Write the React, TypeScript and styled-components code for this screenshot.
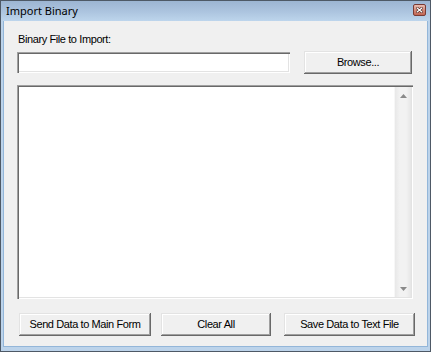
import React from 'react';
import styled, { createGlobalStyle } from 'styled-components';

const GlobalStyle = createGlobalStyle`
  html, body {
    margin: 0;
    padding: 0;
    background: #ffffff;
  }
`;

const Window = styled.div`
  width: 431px;
  height: 352px;
  box-sizing: border-box;
  display: flex;
  flex-direction: column;
  border: 1px solid #4e5966;
  background: #bcd3ea;
  padding: 0 2px 4px 2px;
`;

const TitleBar = styled.div`
  height: 20px;
  margin: 0 -2px;
  display: flex;
  align-items: center;
  justify-content: space-between;
  padding: 0 4px 0 5px;
  background: linear-gradient(to bottom, #9cb5d2 0%, #abc3de 50%, #bdd5ec 100%);
`;

const Title = styled.span`
  font-family: 'Noto Sans', 'DejaVu Sans', sans-serif;
  font-size: 11px;
  color: #000000;
  line-height: 20px;
`;

const CloseButton = styled.div`
  width: 13px;
  height: 12px;
  box-sizing: border-box;
  border: 1px solid #7a3a33;
  border-radius: 2px;
  background: linear-gradient(to bottom, #e9bdb2 0%, #d48c7c 50%, #c16552 100%);
  display: flex;
  align-items: center;
  justify-content: center;
  margin-top: -2px;
`;

const Client = styled.div`
  flex: 1;
  background: #f0f0f0;
  border-left: 1px solid #93b6d9;
  border-right: 1px solid #93b6d9;
  border-bottom: 1px solid #93b6d9;
  display: flex;
  flex-direction: column;
  padding: 12px 0 0 13px;
  font-family: 'Liberation Sans', Arial, sans-serif;
  font-size: 11px;
  letter-spacing: -0.4px;
  color: #000000;
`;

const Label = styled.div`
  line-height: 13px;
  padding-left: 1px;
`;

const FileRow = styled.div`
  display: flex;
  align-items: center;
  gap: 14px;
  margin-top: 5px;
`;

const sunken = `
  box-shadow:
    inset 1px 1px 0 #a0a0a0,
    inset 2px 2px 0 #696969,
    inset -1px -1px 0 #ffffff,
    inset -2px -2px 0 #e3e3e3;
`;

const TextInput = styled.div`
  width: 273px;
  height: 21px;
  background: #ffffff;
  ${sunken}
`;

const Button = styled.div<{ $width: number; $offset?: number }>`
  width: ${(p) => p.$width}px;
  margin-left: ${(p) => p.$offset ?? 0}px;
  height: 23px;
  box-sizing: border-box;
  display: flex;
  align-items: center;
  justify-content: center;
  background: #f0f0f0;
  box-shadow:
    inset -1px -1px 0 #696969,
    inset 1px 1px 0 #e3e3e3,
    inset -2px -2px 0 #a0a0a0,
    inset 2px 2px 0 #ffffff;
  padding-bottom: 1px;
`;

const ListBox = styled.div`
  width: 396px;
  height: 214px;
  margin-top: 11px;
  box-sizing: border-box;
  padding: 2px;
  background: #ffffff;
  display: flex;
  ${sunken}
`;

const ListContent = styled.div`
  flex: 1;
`;

const ScrollBar = styled.div`
  width: 17px;
  display: flex;
  flex-direction: column;
  justify-content: space-between;
  align-items: center;
  background: linear-gradient(to right, #e8e8e8 0%, #f2f2f2 30%, #f2f2f2 70%, #e6e6e6 100%);
  border-left: 1px solid #f7f7f7;
  box-sizing: border-box;
`;

const Arrow = styled.div`
  width: 17px;
  height: 17px;
  display: flex;
  align-items: center;
  justify-content: center;
`;

const ButtonRow = styled.div`
  display: flex;
  margin-top: 14px;
  padding-left: 2px;
`;

const ArrowIcon: React.FC<{ dir: 'up' | 'down' }> = ({ dir }) => (
  <svg width="7" height="4" viewBox="0 0 7 4">
    {dir === 'up' ? (
      <polygon points="3.5,0 7,4 0,4" fill="#8a8a8a" />
    ) : (
      <polygon points="0,0 7,0 3.5,4" fill="#8a8a8a" />
    )}
  </svg>
);

const App: React.FC = () => {
  return (
    <>
      <GlobalStyle />
      <Window>
        <TitleBar>
          <Title>Import Binary</Title>
          <CloseButton>
            <svg width="7" height="6" viewBox="0 0 7 6">
              <path d="M0.5 0.5 L6.5 5.5 M6.5 0.5 L0.5 5.5" stroke="#4a1e18" strokeWidth="2.6" />
              <path d="M0.8 0.8 L6.2 5.2 M6.2 0.8 L0.8 5.2" stroke="#ffffff" strokeWidth="1.4" />
            </svg>
          </CloseButton>
        </TitleBar>
        <Client>
          <Label>Binary File to Import:</Label>
          <FileRow>
            <TextInput />
            <Button $width={108}>Browse...</Button>
          </FileRow>
          <ListBox>
            <ListContent />
            <ScrollBar>
              <Arrow>
                <ArrowIcon dir="up" />
              </Arrow>
              <Arrow>
                <ArrowIcon dir="down" />
              </Arrow>
            </ScrollBar>
          </ListBox>
          <ButtonRow>
            <Button $width={132}>Send Data to Main Form</Button>
            <Button $width={110} $offset={10}>Clear All</Button>
            <Button $width={131} $offset={13}>Save Data to Text File</Button>
          </ButtonRow>
        </Client>
      </Window>
    </>
  );
};

export default App;
